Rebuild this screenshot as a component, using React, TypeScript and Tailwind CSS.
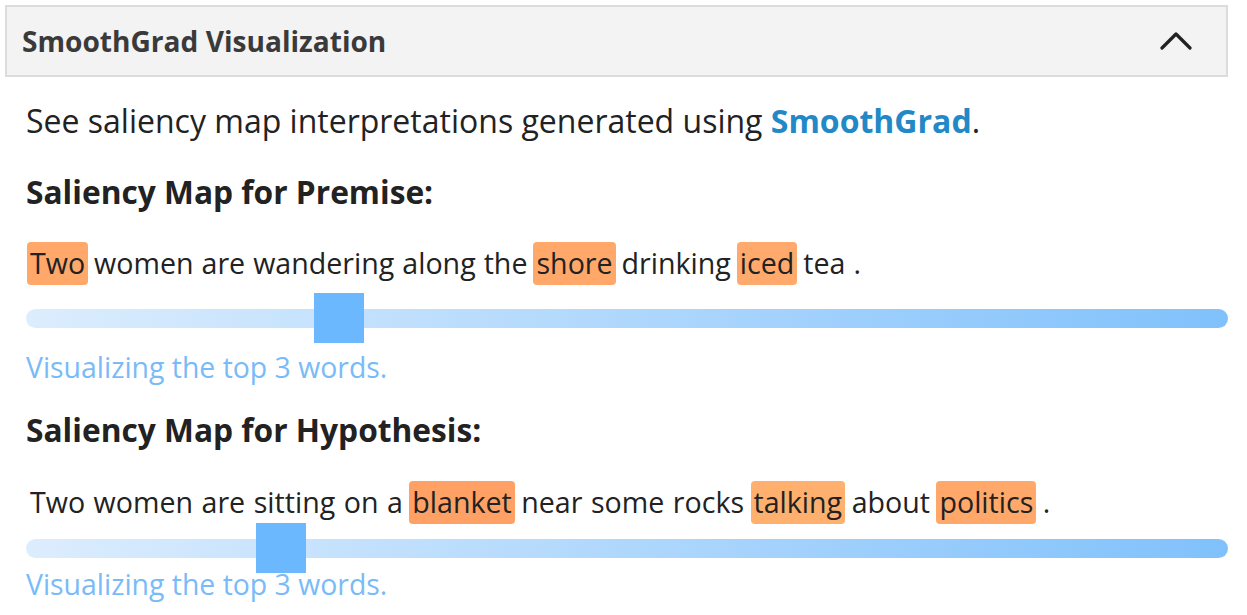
import { useState } from 'react';

type Word = { text: string; color?: string };

const premise: Word[] = [
    { text: 'Two', color: '#ffa86a' },
    { text: 'women' },
    { text: 'are' },
    { text: 'wandering' },
    { text: 'along' },
    { text: 'the' },
    { text: 'shore', color: '#ffa86a' },
    { text: 'drinking' },
    { text: 'iced', color: '#ffaa6c' },
    { text: 'tea' },
    { text: '.' },
];

const hypothesis: Word[] = [
    { text: 'Two' },
    { text: 'women' },
    { text: 'are' },
    { text: 'sitting' },
    { text: 'on' },
    { text: 'a' },
    { text: 'blanket', color: '#ffa064' },
    { text: 'near' },
    { text: 'some' },
    { text: 'rocks' },
    { text: 'talking', color: '#ffb06e' },
    { text: 'about' },
    { text: 'politics', color: '#ffa86a' },
    { text: '.' },
];

function Sentence({ words, indent }: { words: Word[]; indent?: boolean }) {
    return (
        <div className={`flex items-center h-[44px] text-[28.6px] text-[#222] ${indent ? 'pl-[2px] gap-[4.5px]' : 'pl-[1px] gap-[4px]'}`}>
            {words.map((w, i) => (
                <span
                    key={i}
                    className={`${w.color ? 'rounded-[4px] px-[3px]' : 'px-[2px]'} h-[43px] flex items-center`}
                    style={w.color ? { backgroundColor: w.color } : undefined}
                >
                    {w.text}
                </span>
            ))}
        </div>
    );
}

function Slider({ thumbLeft }: { thumbLeft: number }) {
    return (
        <div className="relative h-[50px] flex items-center">
            <div className="w-full h-[19px] rounded-full bg-gradient-to-r from-[#dcedfd] to-[#80c1fb]" />
            <div
                className="absolute top-0 w-[50px] h-[50px] bg-[#6cb8ff]"
                style={{ left: thumbLeft }}
            />
        </div>
    );
}

export default function App() {
    const [open, setOpen] = useState(true);

    return (
        <div className="w-[1247px] h-[615px] bg-white pl-[5px] pr-[19px] pt-[5px] overflow-hidden" style={{ fontFamily: '"Open Sans", Lato, sans-serif' }}>
            <div className="h-[72px] border-2 border-[#dcdcdc] bg-[#f3f3f3] flex items-center justify-between pl-[15px] pr-[34px]">
                <span className="text-[28.1px] font-bold text-[#3a3a3a]">SmoothGrad Visualization</span>
                <button onClick={() => setOpen(!open)} className="w-[32px] h-[32px] flex items-center justify-center">
                    <svg width="32" height="20" viewBox="0 0 32 20" fill="none">
                        <path d="M2 17 L16 3 L30 17" stroke="#222" strokeWidth="3.2" strokeLinecap="round" strokeLinejoin="round" />
                    </svg>
                </button>
            </div>
            {open && (
                <div className="pl-[21px]">
                    <p className="mt-[22px] text-[32px] leading-[44px] text-[#222]">
                        See saliency map interpretations generated using{' '}
                        <a href="#" className="font-bold text-[#2289c6]">SmoothGrad</a>.
                    </p>
                    <h3 className="mt-[29px] text-[31.7px] leading-[40px] font-bold text-[#222]">Saliency Map for Premise:</h3>
                    <div className="mt-[29px]">
                        <Sentence words={premise} />
                    </div>
                    <div className="mt-[8px]">
                        <Slider thumbLeft={288} />
                    </div>
                    <p className="mt-[4px] text-[28.4px] leading-[40px] text-[#79bbf8]">Visualizing the top 3 words.</p>
                    <h3 className="mt-[23px] text-[31.7px] leading-[40px] font-bold text-[#222]">Saliency Map for Hypothesis:</h3>
                    <div className="mt-[30px]">
                        <Sentence words={hypothesis} indent />
                    </div>
                    <div className="mt-[-1px]">
                        <Slider thumbLeft={230} />
                    </div>
                    <p className="mt-[-9px] text-[28.4px] leading-[40px] text-[#79bbf8]">Visualizing the top 3 words.</p>
                </div>
            )}
        </div>
    );
}
